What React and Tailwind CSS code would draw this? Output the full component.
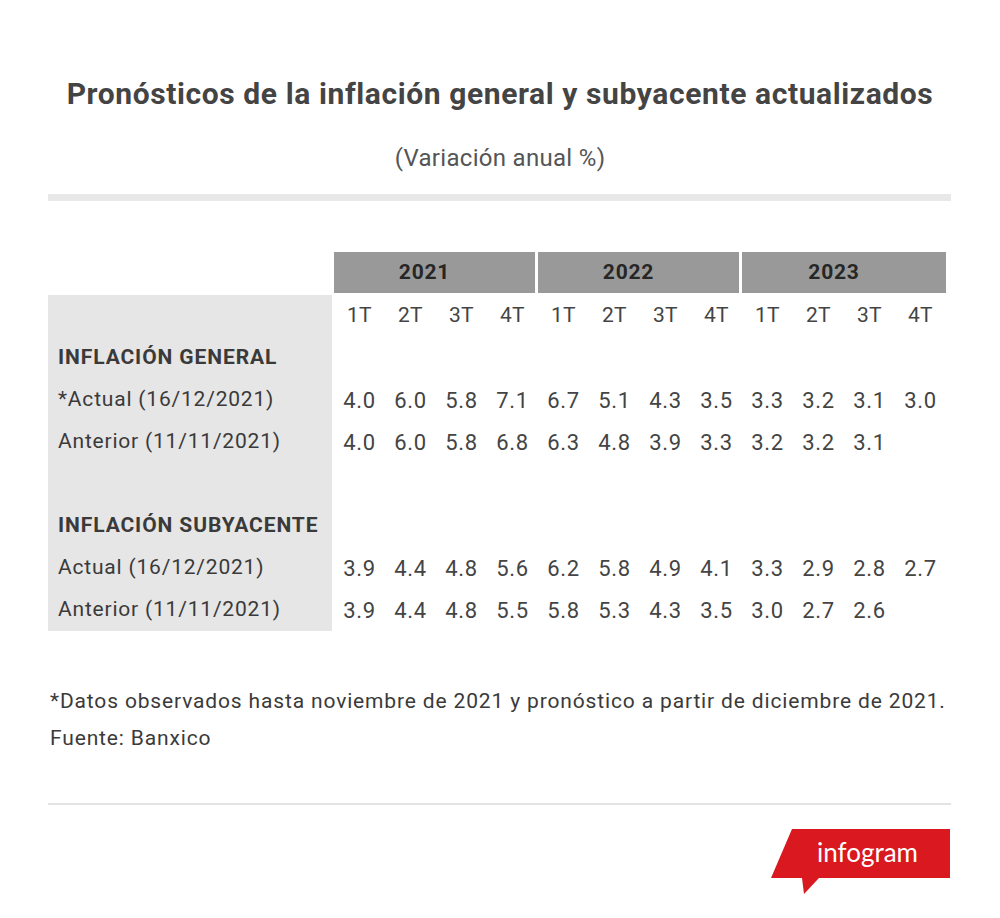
import React from "react";

const rows = [
  { type: "head", label: "INFLACIÓN GENERAL" },
  { label: "*Actual (16/12/2021)", v: ["4.0","6.0","5.8","7.1","6.7","5.1","4.3","3.5","3.3","3.2","3.1","3.0"] },
  { label: "Anterior (11/11/2021)", v: ["4.0","6.0","5.8","6.8","6.3","4.8","3.9","3.3","3.2","3.2","3.1",""] },
  { type: "empty" },
  { type: "head", label: "INFLACIÓN SUBYACENTE" },
  { label: "Actual (16/12/2021)", v: ["3.9","4.4","4.8","5.6","6.2","5.8","4.9","4.1","3.3","2.9","2.8","2.7"] },
  { label: "Anterior (11/11/2021)", v: ["3.9","4.4","4.8","5.5","5.8","5.3","4.3","3.5","3.0","2.7","2.6",""] },
];

const quarters = ["1T","2T","3T","4T","1T","2T","3T","4T","1T","2T","3T","4T"];

function Row({ label, bold, values, small }) {
  return (
    <div className="grid grid-cols-[286px_repeat(12,51px)] h-[42px]">
      <div className={`w-[284px] bg-[#e6e6e6] flex items-center pl-[10px] text-[#3a3a3a] whitespace-nowrap ${bold ? "font-bold text-[21px] tracking-[0.9px]" : "text-[21px] tracking-[0.8px]"}`}>
        {label}
      </div>
      {(values || Array(12).fill("")).map((x, i) => (
        <div key={i} className={`flex items-center justify-center text-[#444] ${small ? "text-[21px] tracking-[0.4px]" : "text-[22px] tracking-[0.6px]"}`}>{x}</div>
      ))}
    </div>
  );
}

export default function App() {
  return (
    <div className="w-[1000px] h-[918px] bg-white px-[48px] pt-[75px]" style={{ fontFamily: "Roboto, 'Liberation Sans', sans-serif" }}>
      <h1 className="text-center font-bold text-[30px] leading-[38px] text-[#444] tracking-[0.6px] whitespace-nowrap">
        Pronósticos de la inflación general y subyacente actualizados
      </h1>
      <div className="text-center text-[24px] leading-[30px] text-[#555] mt-[30px] tracking-[0.3px]">(Variación anual %)</div>
      <div className="h-[7px] bg-[#e8e8e8] mt-[21px] w-[903px]" />

      <div className="mt-[51px]">
        <div className="grid grid-cols-[286px_repeat(12,51px)] h-[41px] mb-[2px]">
          <div />
          <div className="col-span-4 bg-[#999] border-r-[3px] border-white flex items-center justify-center pr-[20px] font-bold text-[21px] tracking-[0.8px] text-[#262626]">2021</div>
          <div className="col-span-4 bg-[#999] border-r-[3px] border-white flex items-center justify-center pr-[20px] font-bold text-[21px] tracking-[0.8px] text-[#262626]">2022</div>
          <div className="col-span-4 bg-[#999] flex items-center justify-center pr-[20px] font-bold text-[21px] tracking-[0.8px] text-[#262626]">2023</div>
        </div>
        <Row label="" values={quarters} small />
        {rows.map((r, i) =>
          r.type === "head" ? (
            <Row key={i} label={r.label} bold />
          ) : r.type === "empty" ? (
            <Row key={i} label="" />
          ) : (
            <Row key={i} label={r.label} values={r.v} />
          )
        )}
      </div>

      <div className="mt-[52px] text-[21px] leading-[37px] text-[#3a3a3a] pl-[2px] tracking-[0.85px] whitespace-nowrap">
        <div>*Datos observados hasta noviembre de 2021 y pronóstico a partir de diciembre de 2021.</div>
        <div>Fuente: Banxico</div>
      </div>

      <div className="h-[2px] bg-[#e3e3e3] mt-[46px] w-[903px]" />

      <div className="flex justify-end mt-[24px] w-[903px]">
        <div className="relative w-[180px] h-[66px]">
          <svg width="180" height="66" viewBox="0 0 180 66" className="absolute inset-0">
            <path d="M21 0 L179 0 L179 49 L48 49 L33 65 L31 49 L0 49 Z" fill="#d9181f" />
          </svg>
          <div className="absolute left-[46px] top-[6px] text-white text-[26px] leading-[34px]" style={{ fontFamily: "Lato, 'Open Sans', sans-serif" }}>
            infogram
          </div>
        </div>
      </div>
    </div>
  );
}
